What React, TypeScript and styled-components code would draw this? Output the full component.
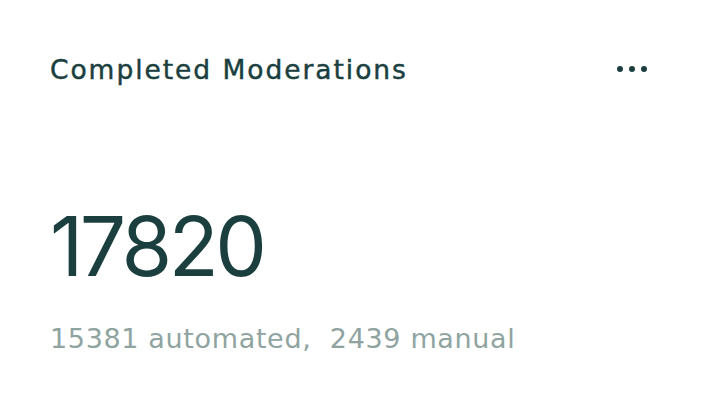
import React from "react";
import styled, { createGlobalStyle } from "styled-components";

const Global = createGlobalStyle`
  html, body { margin: 0; padding: 0; background: #ffffff; }
  body { font-family: "DejaVu Sans", "Inter", sans-serif; }
`;

const Card = styled.div`
  width: 702px;
  height: 405px;
  box-sizing: border-box;
  padding: 50px 55px 0 50px;
  background: #ffffff;
  display: flex;
  flex-direction: column;
`;

const Header = styled.div`
  display: flex;
  align-items: center;
  justify-content: space-between;
  height: 38px;
`;

const Title = styled.h2`
  margin: 0;
  font-family: "DejaVu Sans", sans-serif;
  font-weight: 400;
  font-size: 26.5px;
  letter-spacing: 1.95px;
  color: #1b3f3f;
  -webkit-text-stroke: 0.45px #1b3f3f;
`;

const MenuButton = styled.button`
  border: none;
  background: none;
  padding: 0;
  display: flex;
  gap: 5.5px;
  cursor: pointer;
`;

const Dot = styled.span`
  width: 6.5px;
  height: 6.5px;
  border-radius: 50%;
  background: #1b3f3f;
`;

const Value = styled.div`
  margin-top: 118px;
  font-family: "Inter", sans-serif;
  font-weight: 400;
  font-size: 82px;
  line-height: 82px;
  letter-spacing: -3.5px;
  color: #1b3f3f;
`;

const Breakdown = styled.div`
  margin-top: 35px;
  font-family: "DejaVu Sans", sans-serif;
  font-size: 27px;
  letter-spacing: 0.65px;
  color: #8fa4a1;
  white-space: pre;
`;

export default function App() {
  return (
    <>
      <Global />
      <Card>
        <Header>
          <Title>Completed Moderations</Title>
          <MenuButton aria-label="More options">
            <Dot />
            <Dot />
            <Dot />
          </MenuButton>
        </Header>
        <Value>17820</Value>
        <Breakdown>15381 automated,  2439 manual</Breakdown>
      </Card>
    </>
  );
}
